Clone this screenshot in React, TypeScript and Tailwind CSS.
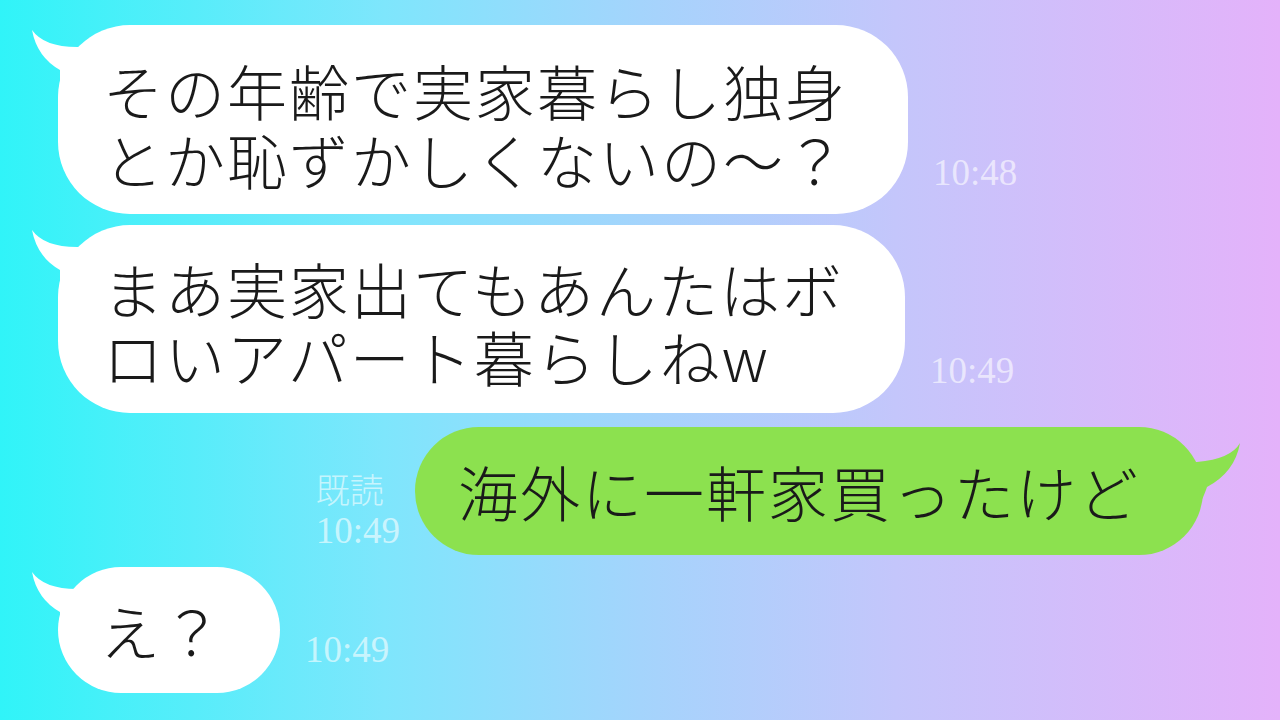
const JP = { fontFamily: '"Noto Sans CJK JP", "Noto Sans", sans-serif' };

function LeftTail() {
  return (
    <svg className="absolute left-[-30px] top-0" width="72" height="80" viewBox="0 0 72 80">
      <path d="M4 5 Q 16 22 49 22 L 72 22 L 72 78 L 32 78 L 32 45 Q 9 32 4 5 Z" fill="#ffffff" />
    </svg>
  );
}

function RightTail() {
  return (
    <svg className="absolute right-[-50px] top-0" width="60" height="80" viewBox="0 0 60 80">
      <path d="M47 16 Q 38 32 4 35 L 0 35 L 0 75 L 8 75 Q 12 66 14 60 Q 42 45 47 16 Z" fill="#8ce14f" />
    </svg>
  );
}

function Time({ children, className = '' }: { children: React.ReactNode; className?: string }) {
  return (
    <div
      className={`text-[37px] leading-none text-white/60 ${className}`}
      style={{ fontFamily: '"Liberation Serif", serif' }}
    >
      {children}
    </div>
  );
}

export default function App() {
  return (
    <div
      className="flex h-[720px] w-[1280px] flex-col overflow-hidden bg-[linear-gradient(to_right,#30f4f8_0%,#7ee6fc_30%,#a4d4fc_50%,#c4c6fb_70%,#e4b2fa_100%)] pt-[25px]"
      style={JP}
    >
      {/* 1 */}
      <div className="flex items-end pl-[58px]">
        <div className="relative flex h-[189px] w-[850px] items-center rounded-[72px] bg-white px-[45px] pt-[9px]">
          <LeftTail />
          <p className="relative whitespace-nowrap text-[60px] font-light leading-[69px] tracking-[2px] text-[#1a1a1a]">
            その年齢で実家暮らし独身
            <br />
            とか恥ずかしくないの～？
          </p>
        </div>
        <Time className="mb-[23px] ml-[25px]">10:48</Time>
      </div>

      {/* 2 */}
      <div className="mt-[11px] flex items-end pl-[58px]">
        <div className="relative flex h-[188px] w-[847px] items-center rounded-[72px] bg-white px-[45px] pt-[5px]">
          <LeftTail />
          <p className="relative whitespace-nowrap text-[60px] font-light leading-[68px] tracking-[2px] text-[#1a1a1a]">
            まあ実家出てもあんたはボ
            <br />
            ロいアパート暮らしねw
          </p>
        </div>
        <Time className="mb-[24px] ml-[25px]">10:49</Time>
      </div>

      {/* 3 */}
      <div className="mt-[14px] flex items-end justify-end pr-[77px]">
        <div className="mb-[6px] mr-[15px] flex flex-col">
          <div className="text-[34px] font-light leading-none text-white/60">既読</div>
          <Time className="mt-[6px]">10:49</Time>
        </div>
        <div className="relative flex h-[128px] w-[788px] items-center rounded-full bg-[#8ce14f] px-[43px]">
          <RightTail />
          <p className="relative whitespace-nowrap text-[60px] font-light leading-none tracking-[2px] text-[#1a1a1a]">
            海外に一軒家買ったけど
          </p>
        </div>
      </div>

      {/* 4 */}
      <div className="mt-[12px] flex items-end pl-[58px]">
        <div className="relative flex h-[126px] w-[222px] items-center rounded-full bg-white px-[42px]">
          <LeftTail />
          <p className="relative whitespace-nowrap text-[60px] font-light leading-none tracking-[2px] text-[#1a1a1a]">
            え？
          </p>
        </div>
        <Time className="mb-[25px] ml-[25px]">10:49</Time>
      </div>
    </div>
  );
}
